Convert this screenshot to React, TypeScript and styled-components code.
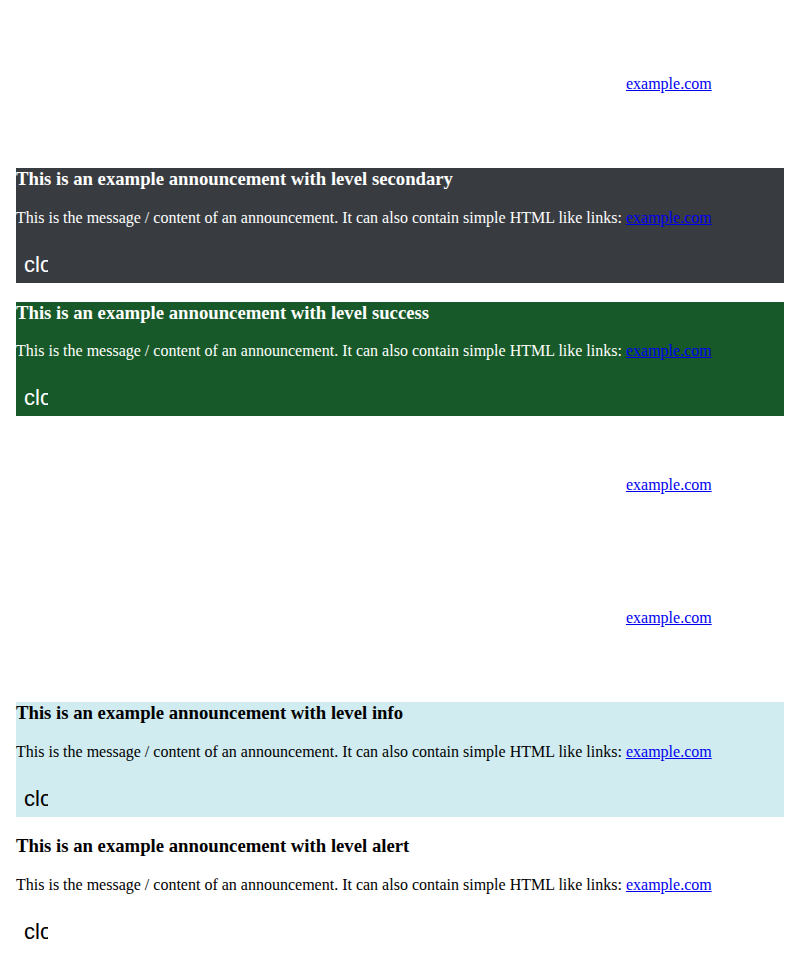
import React from "react";
import styled, { createGlobalStyle } from "styled-components";

const GlobalStyle = createGlobalStyle`
  body {
    margin: 8px;
    background: #ffffff;
    font-family: "Liberation Serif", "Times New Roman", serif;
    font-size: 16px;
  }
`;

type Level = "primary" | "secondary" | "success" | "warning" | "danger" | "info" | "alert";

const palette: Record<Level, { bg: string; fg: string }> = {
  primary: { bg: "transparent", fg: "#ffffff" },
  secondary: { bg: "#383c41", fg: "#ffffff" },
  success: { bg: "#175928", fg: "#ffffff" },
  warning: { bg: "transparent", fg: "#ffffff" },
  danger: { bg: "transparent", fg: "#ffffff" },
  info: { bg: "#d1ecf1", fg: "#000000" },
  alert: { bg: "transparent", fg: "#000000" },
};

const Page = styled.div`
  padding: 8px;
`;

const Announcement = styled.section<{ $level: Level }>`
  background: ${(p) => palette[p.$level].bg};
  color: ${(p) => palette[p.$level].fg};
`;

const Title = styled.h3`
  margin: 18.72px 0;
  font-size: 18.72px;
  font-weight: bold;
  line-height: normal;
`;

const Message = styled.p`
  margin: 16px 0;
  font-size: 16px;
  line-height: normal;

  a {
    color: #0000ee;
    text-decoration: underline;
  }
`;

const CloseButton = styled.button<{ $level: Level }>`
  display: block;
  width: 32px;
  box-sizing: border-box;
  padding: 9px 0 6px 8px;
  margin: 0;
  border: 0;
  background: transparent;
  color: ${(p) => palette[p.$level].fg};
  font-family: "Liberation Sans", Arial, sans-serif;
  font-size: 22px;
  line-height: 25px;
  text-align: left;
  white-space: nowrap;
  overflow: hidden;
  cursor: pointer;
`;

const levels: Level[] = ["primary", "secondary", "success", "warning", "danger", "info", "alert"];

export default function App() {
  return (
    <Page>
      <GlobalStyle />
      {levels.map((level) => (
        <Announcement key={level} $level={level}>
          <Title>This is an example announcement with level {level}</Title>
          <Message>
            This is the message / content of an announcement. It can also contain simple HTML like links:{" "}
            <a href="#">example.com</a>
          </Message>
          <CloseButton $level={level}>close</CloseButton>
        </Announcement>
      ))}
    </Page>
  );
}
